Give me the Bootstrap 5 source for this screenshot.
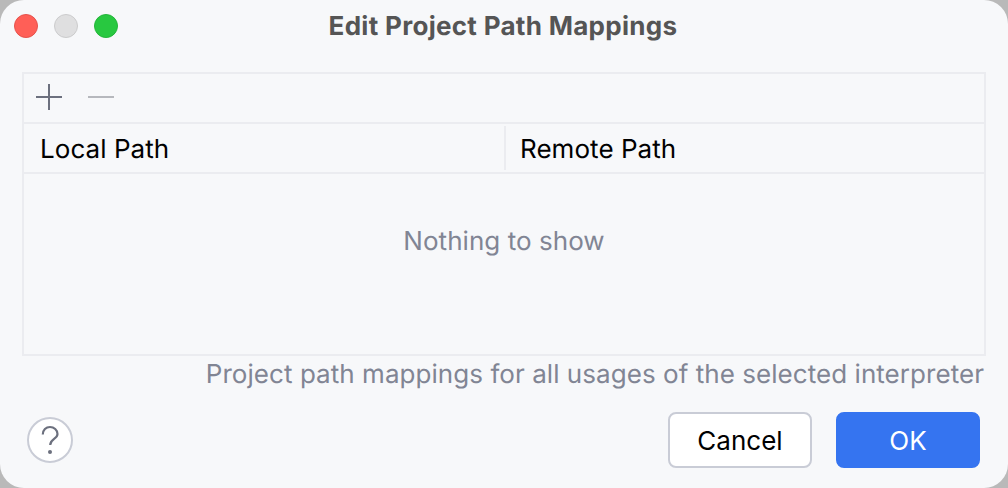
<!DOCTYPE html>
<html lang="en">
<head>
  <meta charset="UTF-8">
  <title>Edit Project Path Mappings</title>
  <link href="https://cdn.jsdelivr.net/npm/bootstrap@5.3.0/dist/css/bootstrap.min.css" rel="stylesheet">
  <style>
    html, body {
      height: 488px;
      overflow: hidden;
      background: #b9b9b9;
    }
    body {
      font-family: Inter, "Liberation Sans", sans-serif;
      font-size: 26px;
      line-height: 32px;
      letter-spacing: .05px;
      color: #000;
      text-rendering: geometricPrecision;
    }
    .dialog-win {
      width: 1008px;
      height: 488px;
      background: #f7f8fa;
      border-radius: 24px;
      overflow: hidden;
    }
    .title-bar {
      height: 52px;
      padding: 0 14px;
      gap: 16px;
    }
    .traffic {
      width: 24px;
      height: 24px;
      border-radius: 50%;
      border: 1px solid;
    }
    .traffic-red { background: #ff5f57; border-color: #e5524c; }
    .traffic-grey { background: #dfdfe0; border-color: #cbcbcc; }
    .traffic-green { background: #28c840; border-color: #24b53a; }
    .title-text {
      font-weight: 700;
      font-size: 26px;
      letter-spacing: .3px;
      color: #555;
      left: 0;
      right: 2px;
      top: 11px;
    }
    .map-panel {
      margin: 20px 22px 0 22px;
      height: 284px;
      border: 2px solid #ebecf0;
    }
    .tool-row {
      height: 50px;
      padding: 0 0 2px 12px;
      gap: 26px;
      border-bottom: 2px solid #ebecf0;
    }
    .head-row {
      height: 50px;
      border-bottom: 2px solid #ebecf0;
      padding: 2px 0;
    }
    .head-cell {
      width: 50%;
      padding: 4px 0 0 16px;
    }
    .head-cell + .head-cell {
      border-left: 2px solid #ebecf0;
      padding-left: 14px;
    }
    .empty-note {
      color: #818594;
      height: 134px;
      padding-top: 2px;
    }
    .hint-text {
      color: #818594;
      text-align: right;
      padding: 3px 24px 0 0;
    }
    .foot-row {
      padding: 21px 28px 0 27px;
    }
    .help-circle {
      width: 46px;
      height: 46px;
      border-radius: 50%;
      background: #fff;
      border: 2px solid #c9ccd6;
    }
    .btn.btn-cancel, .btn.btn-ok {
      width: 144px;
      height: 56px;
      padding: 1px 0 0;
      font-size: 26px;
      line-height: 32px;
      border-radius: 8px;
    }
    .btn.btn-cancel {
      background: #fff;
      border: 2px solid #c9ccd6;
      color: #000;
    }
    .btn.btn-ok {
      background: #3574f0;
      border: 2px solid #3574f0;
      color: #fff;
    }
  </style>
</head>
<body>

  <div class="dialog-win">
    <!-- Title bar -->
    <div class="title-bar d-flex align-items-center position-relative">
      <span class="traffic traffic-red"></span>
      <span class="traffic traffic-grey"></span>
      <span class="traffic traffic-green"></span>
      <div class="title-text position-absolute text-center">Edit Project Path Mappings</div>
    </div>

    <!-- Mappings table -->
    <div class="map-panel">
      <div class="tool-row d-flex align-items-center">
        <svg width="26" height="26" viewBox="0 0 26 26"><path d="M0 13H26M13 0V26" stroke="#6c707e" stroke-width="2"/></svg>
        <svg width="26" height="26" viewBox="0 0 26 26"><path d="M0 13H26" stroke="#b6b8bd" stroke-width="2"/></svg>
      </div>
      <div class="head-row d-flex align-items-stretch">
        <div class="head-cell d-flex align-items-center">Local Path</div>
        <div class="head-cell d-flex align-items-center">Remote Path</div>
      </div>
      <div class="empty-note d-flex align-items-center justify-content-center">Nothing to show</div>
    </div>
    <div class="hint-text">Project path mappings for all usages of the selected interpreter</div>

    <!-- Footer -->
    <div class="foot-row d-flex align-items-center justify-content-between">
      <div class="help-circle d-flex align-items-center justify-content-center">
        <svg width="18" height="30" viewBox="0 0 18 30" fill="none"><path d="M1.800 9.500C1.800 5 5 2 9 2S16.500 5 16.500 9C16.500 14 9.200 14 9.200 20" stroke="#6c707e" stroke-width="2.200"/><circle cx="9" cy="27" r="2" fill="#6c707e"/></svg>
      </div>
      <div class="d-flex gap-4">
        <button class="btn btn-cancel">Cancel</button>
        <button class="btn btn-ok">OK</button>
      </div>
    </div>
  </div>

  <script src="https://cdn.jsdelivr.net/npm/bootstrap@5.3.0/dist/js/bootstrap.bundle.min.js"></script>
</body>
</html>
